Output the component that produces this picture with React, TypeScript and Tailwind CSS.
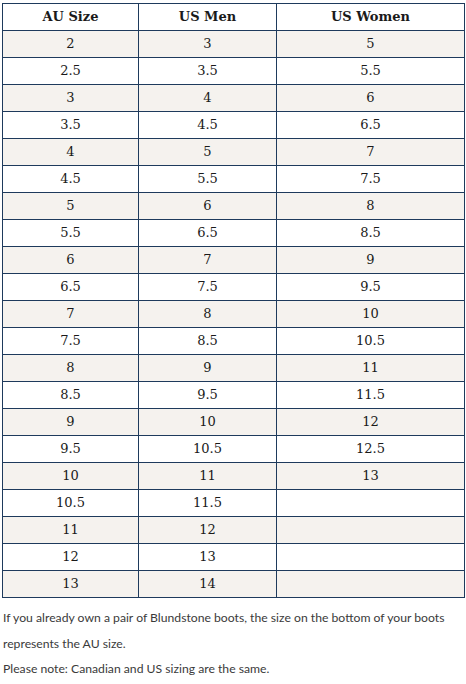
import React from "react";

const rows: [string, string, string][] = [
  ["2", "3", "5"],
  ["2.5", "3.5", "5.5"],
  ["3", "4", "6"],
  ["3.5", "4.5", "6.5"],
  ["4", "5", "7"],
  ["4.5", "5.5", "7.5"],
  ["5", "6", "8"],
  ["5.5", "6.5", "8.5"],
  ["6", "7", "9"],
  ["6.5", "7.5", "9.5"],
  ["7", "8", "10"],
  ["7.5", "8.5", "10.5"],
  ["8", "9", "11"],
  ["8.5", "9.5", "11.5"],
  ["9", "10", "12"],
  ["9.5", "10.5", "12.5"],
  ["10", "11", "13"],
  ["10.5", "11.5", ""],
  ["11", "12", ""],
  ["12", "13", ""],
  ["13", "14", ""],
];

const cell = "border border-[#1e3a5c] h-[27px] p-0 text-center align-middle";

const App: React.FC = () => {
  return (
    <div className="w-[466px] h-[684px] bg-white overflow-hidden">
      <table className="ml-[2px] mt-[3px] w-[463px] border-collapse font-['DejaVu_Serif',serif] text-[13px] text-[#1a1a1a]">
        <thead>
          <tr className="bg-white">
            <th className={`${cell} w-[136px] font-bold`}>AU Size</th>
            <th className={`${cell} w-[138px] font-bold`}>US Men</th>
            <th className={`${cell} font-bold`}>US Women</th>
          </tr>
        </thead>
        <tbody>
          {rows.map((r, i) => (
            <tr key={i} className={i % 2 === 0 ? "bg-[#f5f2ee]" : "bg-white"}>
              <td className={cell}>{r[0]}</td>
              <td className={cell}>{r[1]}</td>
              <td className={cell}>{r[2]}</td>
            </tr>
          ))}
        </tbody>
      </table>
      <div className="mt-[7px] pl-[3px] w-[463px] font-['Lato',sans-serif] text-[12.2px] leading-[25.5px] text-[#3a3a3a]">
        <p>
          If you already own a pair of Blundstone boots, the size on the bottom of your boots represents the AU size.
        </p>
        <p>Please note: Canadian and US sizing are the same.</p>
      </div>
    </div>
  );
};

export default App;
